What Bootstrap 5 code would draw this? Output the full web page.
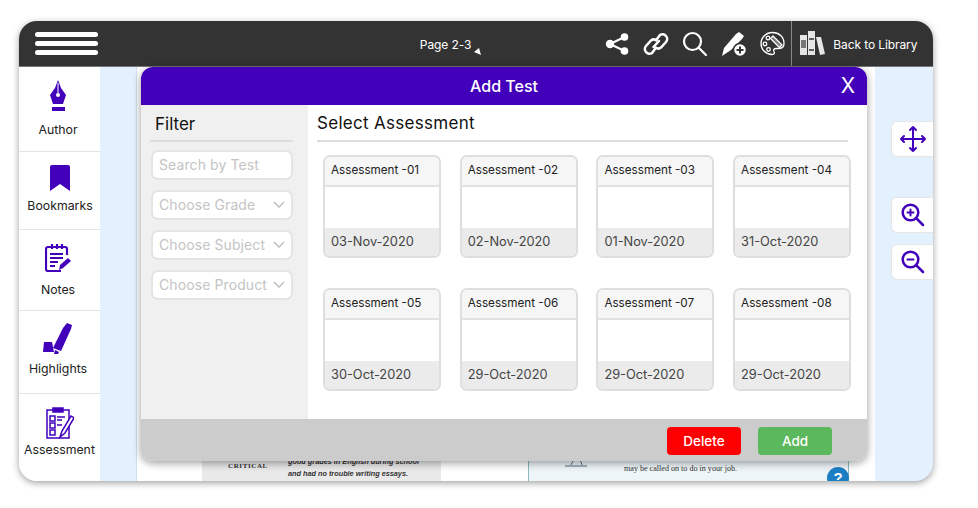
<!DOCTYPE html>
<html lang="en"><head><meta charset="utf-8"><title>Add Test</title>
<link rel="stylesheet" href="https://cdn.jsdelivr.net/npm/bootstrap@5.3.0/dist/css/bootstrap.min.css">
<style>
html,body{height:100%;background:#fff}
body{font-family:Inter,"Liberation Sans",sans-serif;color:#222;padding:21px 45px 27px 19px;overflow:hidden}
.frame{height:460px;border-radius:18px;overflow:hidden;box-shadow:0 2px 7px rgba(0,0,0,.38);position:relative;background:#e3f0fd}
.topbar{height:46px;flex:none;background:#333;color:#fff;padding:0 0 0 16px;border-bottom:1px solid #777}
.burger{width:63px;gap:4px}
.burger i{display:block;height:5px;background:#fff;border-radius:3px}
.pageno{font-size:12px;margin-left:322px;width:186px;position:relative;letter-spacing:-.1px;padding-top:2px}
.pageno svg{position:absolute;left:54px;top:14px}
.tools svg{display:block}
.tool1{margin-right:13px}
.back{border-left:1px solid #888;height:45px;margin-left:6px;padding-left:7px;width:142px;font-size:12px;gap:8px;white-space:nowrap;letter-spacing:-.1px}
.back span{padding-top:2px}
.main{height:414px}
.side{width:81px;background:#fff;flex:none;font-size:12.3px;color:#222}
.side-item{border-bottom:1px solid #e4e4e4;text-align:center}
.side-item:last-child{border-bottom:0}
.side-item svg{display:block;margin:0 auto}
.s1{height:85px;padding:13px 3px 0 0}.s2{height:78px;padding:13px 0 0 1px}.s3{height:81px;padding:14px 3px 0 0}.s4{height:83px;padding:11px 3px 0 0}.s5{height:87px;padding-top:13px}
.l1{margin-top:8px}.l2{margin-top:6px}.l3{margin-top:9px}.l4{margin-top:6px}.l5{margin-top:2px}
.canvas{flex:1;position:relative;padding:0 58px 0 36px}
.book{background:#fff;height:100%;position:relative;overflow:hidden;border-left:1px solid #cfe0e8;width:739px}
.bl{position:absolute;left:65px;top:389px;width:239px;height:30px;background:#e9e9ea;font:italic 700 7.3px "Liberation Sans",sans-serif;color:#333}
.bl b{position:absolute;left:26px;top:6px;font:700 7px "Liberation Serif",serif;letter-spacing:.6px}
.bl span{position:absolute;left:86px;white-space:nowrap}
.br{position:absolute;left:391px;top:389px;width:321px;height:30px;background:#eef5f8;border:1px solid #8fb9bc;border-top:0;font:8.1px "Liberation Serif",serif;color:#333}
.br span{position:absolute;left:95px;top:8px;white-space:nowrap}
.br svg{position:absolute;left:19px;top:0}
.help{position:absolute;left:690px;top:400px;width:22px;height:22px;border-radius:50%;background:#1c7fc4;color:#fff;font:700 15px/22px "Liberation Sans",sans-serif;text-align:center}
.zoomer{position:absolute;right:0;width:42px;height:36px;background:#fff;border-radius:6px 0 0 6px;border:1px solid #e6e6e6;border-right:0}
.z1{top:54px}.z2{top:130px}.z3{top:177px}
.dlg{position:absolute;left:41px;top:0;width:726px;height:394px;border-radius:12px;overflow:hidden;background:#fff;box-shadow:0 2px 8px rgba(0,0,0,.4)}
.dlg-head{height:38px;background:#4200bb;color:#fff;font-size:16px;position:relative;font-weight:500}
.dlg-x{position:absolute;right:12px;top:6px;font-size:21px;font-weight:400;line-height:26px}
.dlg-body{height:314px}
.filter{width:167px;background:#f0f0f0;padding:7px 15px 0 10px;flex:none}
.filter h5{font-size:17px;font-weight:400;color:#111;margin:0 0 0 4px;line-height:24px}
.filter hr{margin:4px 0 8px -1px;border:0;border-top:2px solid #ddd;opacity:1}
.fld{height:30px;border:2px solid #e4e4e4;border-radius:7px;background:#fff;font-size:14px;color:#c4c4c4;padding:0 6px 2px;margin-bottom:10px;white-space:nowrap;letter-spacing:.1px}
.pick{width:559px;flex:none;padding:6px 19px 0 9px}
.pick h5{font-size:17px;font-weight:400;color:#111;margin:0;line-height:24px;letter-spacing:.3px}
.pick hr{margin:5px 0 13px;border:0;border-top:2px solid #ddd;opacity:1}
.grid-a{display:grid;grid-template-columns:repeat(4,118px);column-gap:18.7px;row-gap:30px;padding-left:6px;width:max-content}
.tcard{height:103px;border:2px solid #dedede;border-radius:7px;overflow:hidden;background:#fff;color:#222}
.tcard .t{height:30px;font-size:11.7px;background:#f6f6f6;border-bottom:2px solid #e2e2e2;padding:0 6px;line-height:27px}
.tcard .m{height:41px}
.tcard .d{height:28px;font-size:12.8px;background:#ebebeb;padding:0 6px;line-height:28px;color:#444}
.dlg-foot{height:42px;background:#ccc;padding:8px 35px 0 0;gap:17px}
.act{width:74px;height:28px;border-radius:4px;color:#fff;font-size:13.5px;font-weight:500;border:0;padding:0}
.act-del{background:#f00}.act-add{background:#5cb85c}
</style></head><body>
<div class="frame d-flex flex-column">
 <div class="topbar d-flex align-items-center">
  <div class="burger d-flex flex-column"><i></i><i></i><i></i></div>
  <div class="pageno text-nowrap">Page 2-3<svg width="7" height="7" viewBox="0 0 7 7"><path d="M0 4 5 0 7 7z" fill="#fff"/></svg></div>
  <div class="tools d-flex align-items-center">
   <svg class="tool1" width="25" height="24" viewBox="0 0 25 24" fill="#fff"><circle cx="5" cy="12" r="4.200"/><circle cx="19.500" cy="5" r="3.800"/><circle cx="19.500" cy="19" r="3.800"/><path d="M5 12 19.500 5M5 12l14.500 7" stroke="#fff" stroke-width="2"/></svg>
   <svg class="tool1" width="26" height="26" viewBox="0 0 26 26" fill="none" stroke="#fff" stroke-width="2.500" stroke-linecap="round"><path d="M10.500 16 16 10"/><path d="M14 8 17 4a4.500 4.500 0 0 1 6 1 4.500 4.500 0 0 1 0 6l-5 5.500a4.300 4.300 0 0 1-5.500 0"/><path d="M12 18 9 22a4.500 4.500 0 0 1-6-1 4.500 4.500 0 0 1 0-6l5-5.500a4.300 4.300 0 0 1 5.500 0"/></svg>
   <svg class="tool1" width="26" height="26" viewBox="0 0 26 26" fill="none" stroke="#fff" stroke-width="2.200" stroke-linecap="round"><circle cx="10.500" cy="10.500" r="8.500"/><path d="M17 17l7 7"/></svg>
   <svg class="tool1" width="26" height="26" viewBox="0 0 26 26" fill="#fff"><path d="M1 25 3 17 15 3l3-2 5 4-2 3-11 11z"/><circle cx="19" cy="19" r="6.500" stroke="#333" stroke-width="1.500"/><path d="M19 15.500v7M15.500 19h7" stroke="#333" stroke-width="2"/></svg>
   <svg width="25" height="25" viewBox="0 0 25 25" fill="none" stroke="#fff" stroke-width="1.300"><path d="M12.500 1.500C6 1.500 1 6.500 1 12.500s5 11 11 11c2.500 0 2.800-1.800 2-3-.9-1.500 0-3 2-3h3c3 0 5-2 5-5C24 6 19 1.500 12.500 1.500z"/><circle cx="8" cy="7" r="1.800"/><circle cx="5" cy="13" r="1.800"/><circle cx="8.500" cy="18.500" r="1.800"/><path d="M13 5l9 9-2.500 2.500-9-9z" fill="#fff" fill-opacity=".35"/></svg>
  </div>
  <div class="back d-flex align-items-center">
   <svg width="26" height="25" viewBox="0 0 26 25" fill="#e6e6e6"><rect x="1" y="4" width="7" height="20"/><rect x="9" y="0" width="7" height="24"/><path d="M17 6h5l4 17-5 1z"/><path d="M2 9h5v8H2z" fill="#777"/><path d="M10 8h5M10 19h5" stroke="#333" stroke-width="1.500"/></svg>
   <span>Back to Library</span>
  </div>
 </div>
 <div class="main d-flex">
  <div class="side d-flex flex-column">
   <div class="side-item s1"><svg width="18" height="33" viewBox="0 0 18 33" fill="#4200bb"><path d="M9 0 12 8 17 15 14 24H4L1 15 6 8z"/><rect x="3" y="27" width="13" height="4"/><circle cx="9" cy="15" r="2" fill="#fff"/><path d="M9 3v10" stroke="#fff"/></svg><div class="l1">Author</div></div>
   <div class="side-item s2"><svg width="20" height="26" viewBox="0 0 20 26" fill="#4200bb"><path d="M2 0h16a2 2 0 0 1 2 2v24l-10-7-10 7V2a2 2 0 0 1 2-2z"/></svg><div class="l2">Bookmarks</div></div>
   <div class="side-item s3"><svg width="26" height="28" viewBox="0 0 26 28" fill="none" stroke="#4200bb" stroke-width="2.200"><path d="M22 11V5a2 2 0 0 0-2-2H3a2 2 0 0 0-2 2v20a2 2 0 0 0 2 2h13"/><path d="M7 0v5M12 0v5M17 0v5M5 10h13M5 14h13M5 18h8M5 22h5"/><path d="M14 26l1-5 8-7 3 3-8 7z" fill="#4200bb" stroke="none"/></svg><div class="l3">Notes</div></div>
   <div class="side-item s4"><svg width="30" height="32" viewBox="0 0 30 32" fill="#4200bb"><path d="M24 1l5 2-1 4-10 22-8-3L20 6z"/><path d="M1 20h8l2 10H0z"/><path d="M12 28l4 2-1 2h-4z"/></svg><div class="l4">Highlights</div></div>
   <div class="side-item s5"><svg width="28" height="32" viewBox="0 0 28 32" fill="none" stroke="#4200bb" stroke-width="1.500"><rect x="1" y="3" width="22" height="28"/><rect x="7" y="1" width="10" height="4" fill="#4200bb"/><rect x="4" y="9" width="5" height="5"/><rect x="4" y="16" width="5" height="5"/><rect x="4" y="23" width="5" height="5"/><path d="M11 10h8M11 13h5M11 18h5"/><path d="M14 30l2-6 9-15 3 2-9 15z" fill="#fff"/></svg><div class="l5">Assessment</div></div>
  </div>
  <div class="canvas">
   <div class="book">
    <div class="bl"><b>CRITICAL</b><span style="top:1px">good grades in English during school</span><span style="top:13px">and had no trouble writing essays.</span></div>
    <div class="br"><svg width="56" height="12" viewBox="0 0 56 12" fill="none" stroke="#53707f"><path d="M1 0c0 2 1 3 3 3h46c2 0 3-1 3-3M26 3l-3 6M32 3l2 6M17 10h22"/></svg><span>may be called on to do in your job.</span></div>
    <div class="help">?</div>
   </div>
   <div class="zoomer z1 d-flex align-items-center justify-content-center"><svg width="28" height="28" viewBox="0 0 28 28" fill="none" stroke="#4200bb" stroke-width="2" stroke-linecap="round" stroke-linejoin="round"><path d="M14 2v24M2 14h24M11 5l3-3 3 3M11 23l3 3 3-3M5 11l-3 3 3 3M23 11l3 3-3 3"/></svg></div>
   <div class="zoomer z2 d-flex align-items-center justify-content-center"><svg width="24" height="24" viewBox="0 0 24 24" fill="none" stroke="#4200bb" stroke-width="2.500" stroke-linecap="round"><circle cx="9.500" cy="9.500" r="7.800"/><path d="M15 15l7 7"/><path d="M9.500 6.500v6M6.500 9.500h6" stroke-width="2"/></svg></div>
   <div class="zoomer z3 d-flex align-items-center justify-content-center"><svg width="24" height="24" viewBox="0 0 24 24" fill="none" stroke="#4200bb" stroke-width="2.500" stroke-linecap="round"><circle cx="9.500" cy="9.500" r="7.800"/><path d="M15 15l7 7"/><path d="M6.500 9.500h6" stroke-width="2"/></svg></div>
   <div class="dlg">
    <div class="dlg-head d-flex align-items-center justify-content-center">Add Test<span class="dlg-x">X</span></div>
    <div class="dlg-body d-flex">
     <div class="filter">
      <h5>Filter</h5><hr>
      <div class="fld d-flex align-items-center">Search by Test</div>
      <div class="fld d-flex align-items-center justify-content-between">Choose Grade<svg width="12" height="7" viewBox="0 0 12 7" fill="none" stroke="#bbb" stroke-width="1.300"><path d="M1 1l5 5 5-5"/></svg></div>
      <div class="fld d-flex align-items-center justify-content-between">Choose Subject<svg width="12" height="7" viewBox="0 0 12 7" fill="none" stroke="#bbb" stroke-width="1.300"><path d="M1 1l5 5 5-5"/></svg></div>
      <div class="fld d-flex align-items-center justify-content-between">Choose Product<svg width="12" height="7" viewBox="0 0 12 7" fill="none" stroke="#bbb" stroke-width="1.300"><path d="M1 1l5 5 5-5"/></svg></div>
     </div>
     <div class="pick">
      <h5>Select Assessment</h5><hr>
      <div class="grid-a">
       <div class="tcard"><div class="t">Assessment -01</div><div class="m"></div><div class="d">03-Nov-2020</div></div>
       <div class="tcard"><div class="t">Assessment -02</div><div class="m"></div><div class="d">02-Nov-2020</div></div>
       <div class="tcard"><div class="t">Assessment -03</div><div class="m"></div><div class="d">01-Nov-2020</div></div>
       <div class="tcard"><div class="t">Assessment -04</div><div class="m"></div><div class="d">31-Oct-2020</div></div>
       <div class="tcard"><div class="t">Assessment -05</div><div class="m"></div><div class="d">30-Oct-2020</div></div>
       <div class="tcard"><div class="t">Assessment -06</div><div class="m"></div><div class="d">29-Oct-2020</div></div>
       <div class="tcard"><div class="t">Assessment -07</div><div class="m"></div><div class="d">29-Oct-2020</div></div>
       <div class="tcard"><div class="t">Assessment -08</div><div class="m"></div><div class="d">29-Oct-2020</div></div>
      </div>
     </div>
    </div>
    <div class="dlg-foot d-flex justify-content-end align-items-start">
     <button class="act act-del" type="button">Delete</button>
     <button class="act act-add" type="button">Add</button>
    </div>
   </div>
  </div>
 </div>
</div>
<script src="https://cdn.jsdelivr.net/npm/bootstrap@5.3.0/dist/js/bootstrap.bundle.min.js"></script>
</body></html>
